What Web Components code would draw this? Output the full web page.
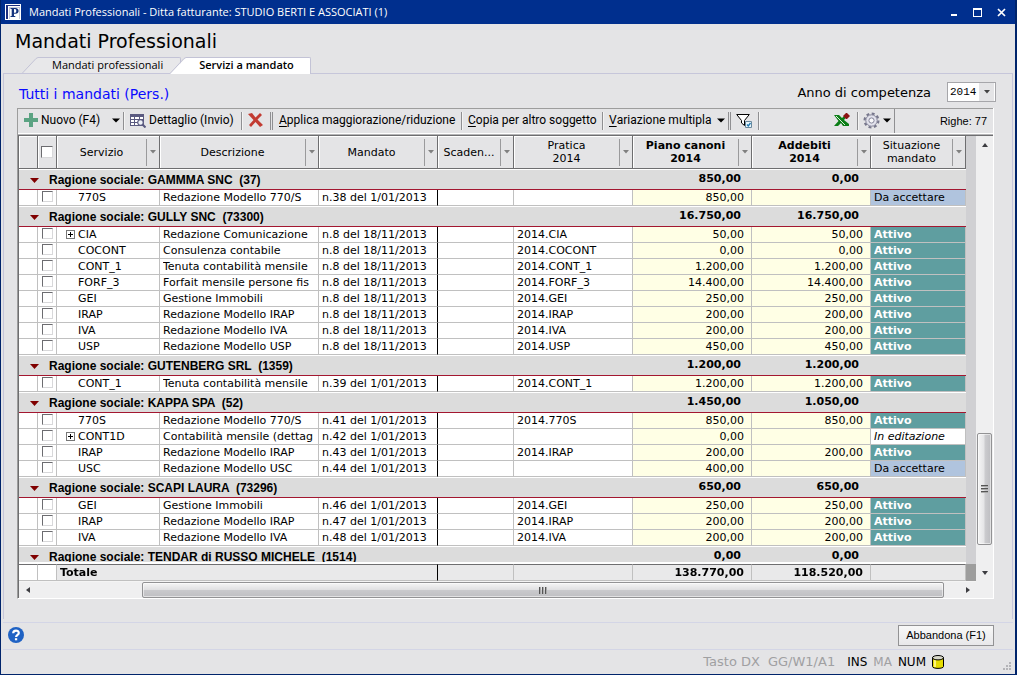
<!DOCTYPE html>
<html lang="it">
<head>
<meta charset="utf-8">
<title>Mandati Professionali</title>
<style>
html, body { height: 100%; margin: 0; }
body { background: #00246b; font: 11px/15px "DejaVu Sans", sans-serif; color: #000; }
</style>
</head>
<body>
<app-window></app-window>

<script>
const define = (name, html, setup) => {
  const tpl = document.createElement('template');
  tpl.innerHTML = html;
  customElements.define(name, class extends HTMLElement {
    connectedCallback() {
      if (this.shadowRoot) return;
      this.attachShadow({ mode: 'open' }).append(tpl.content.cloneNode(true));
      if (setup) setup(this, this.shadowRoot);
    }
  });
};

/* ---------- title bar ---------- */
define('title-bar', `
<style>
:host { display: flex; align-items: center; height: 24px; flex: none; background: #002f8e; color: #fff; font: 11px/16px "Open Sans", sans-serif; padding: 0 2px 0 4px; }
span { margin-left: 8px; flex: 1; white-space: nowrap; overflow: hidden; }
button { appearance: none; border: 0; padding: 0; background: none; width: 24px; height: 20px; color: #fff; display: grid; place-items: center; }
svg { display: block; }
</style>
<svg width="16" height="16" viewBox="0 0 16 16" aria-hidden="true" shape-rendering="crispEdges">
  <path fill="#fff" d="M0 0h16v16H0z"/><path fill="#1d2f80" d="M1 1h14v1H3v13H1z"/><path fill="#c6cad8" d="M4 3h11v12H4z"/><path fill="#fff" d="M5 4h9v11H5z"/>
  <path fill="#16357f" shape-rendering="auto" fill-rule="evenodd" d="M5.500 4h5c4.200 0 4.200 5.800 0 5.800H9V12h1.300v1H5.500v-1h1.200V5H5.500zM9 5v3.800h.8c2 0 2-3.800 0-3.800z"/>
</svg>
<span><slot></slot></span>
<button aria-label="Riduci"><svg width="11" height="9"><path fill="#fff" d="M3 6h6v2H3z"/></svg></button>
<button aria-label="Ingrandisci"><svg width="11" height="9" shape-rendering="crispEdges"><path fill="#fff" fill-rule="evenodd" d="M1 0h9v9H1zM2 2v6h7V2z"/></svg></button>
<button aria-label="Chiudi"><svg width="9" height="9" viewBox="0 0 9 9"><path stroke="#fff" stroke-width="1.700" d="M1 1l7 7M8 1L1 8"/></svg></button>
`);

/* ---------- tabs ---------- */
define('page-tab', `
<style>
:host { display: flex; height: 17px; --line: #c3c3d6; --fill: #e8e8ea; }
:host([selected]) { --fill: #fff; margin-left: -11px; position: relative; }
svg { display: block; flex: none; }
button { appearance: none; box-sizing: border-box; margin: 0; height: 17px; border: solid var(--line); border-width: 1px 1px 0 0; border-radius: 0 2px 0 0; background: var(--fill); color: #000; padding: 0 17px 3px 14px; font: 11px/13px "Open Sans", sans-serif; white-space: nowrap; }
:host([selected]) button { font-weight: 600; padding: 0 16px 3px 13px; }
</style>
<svg width="16" height="17" viewBox="0 0 16 17"><path style="fill:var(--fill)" d="M0 17L16 .5V17z"/><path style="stroke:var(--line)" fill="none" d="M0 16.500L14 1.500 16 .5"/></svg>
<button role="tab"><slot></slot></button>
`);

/* ---------- toolbar pieces ---------- */
define('tool-button', `
<style>
:host { display: block; flex: none; }
button { appearance: none; border: 0; margin: 0; padding: 0; background: none; color: #000; font: 12px/16px Roboto, sans-serif; display: flex; align-items: center; height: 22px; white-space: nowrap; }
::slotted(svg) { display: block; margin-right: 3px; }
.arrow { display: none; margin-left: 6px; }
:host([menu]) .arrow { display: block; }
:host([menu=icon]) .arrow { margin-left: 0; }
</style>
<button><slot name="icon"></slot><slot></slot><svg class="arrow" width="8" height="5" viewBox="0 0 8 5"><path d="M0 .5h8L4 4.500z"/></svg></button>
`);
define('tool-separator', `
<style>
:host { display: block; flex: none; width: 0; height: 18px; border-left: 1px solid #8f8f92; border-right: 1px solid #f4f4f4; }
:host([double]) { width: 1px; border-right-color: #8f8f92; }
</style>`);

define('grid-toolbar', `
<style>
:host { display: flex; align-items: center; height: 24px; flex: none; padding-left: 6px; border-top: 1px solid #9d9d9d; border-bottom: 1px solid #fff; }
tool-button { padding-bottom: 2px; }
tool-separator { margin: 0 4px; }
.space { flex: 1; }
.count { display: flex; align-items: center; justify-content: flex-end; box-sizing: border-box; width: 99px; height: 24px; border-left: 1px solid #8f8f92; padding-right: 6px; margin-left: 3px; font: 11px/16px "Liberation Sans", sans-serif; }
u { text-underline-offset: 2px; }
.wide { width: 95px; }
.detail { width: 107px; margin-left: 1px; }
.drop { margin-left: 1px; }
.apply { margin-left: 2px; width: 178px; }
.copy { margin-left: 1px; width: 130px; }
.vary { margin-left: 1px; width: 115px; }
.filter { width: 18px; margin-left: 1px; }
</style>
<tool-button class="wide" menu><svg slot="icon" width="14" height="14" viewBox="0 0 14 14" shape-rendering="crispEdges"><path fill="#5ba383" d="M5 0h4v5h5v4H9v5H5V9H0V5h5z"/></svg>Nuovo (F4)&nbsp;&nbsp;</tool-button>
<tool-separator></tool-separator>
<tool-button class="detail"><svg slot="icon" width="16" height="15" viewBox="0 0 16 15"><path fill="#5a5a80" d="M0 1h14v12H0z"/><path fill="#fff" d="M1 4h3v2H1zM5 4h4v2H5zM10 4h3v2h-3zM1 7h3v2H1zM5 7h4v2H5zM10 7h3v2h-3zM1 10h3v2H1zM5 10h4v2H5z"/><circle cx="10.500" cy="9.500" r="2.800" fill="#eef2f8" stroke="#5a5a80" stroke-width="1.200"/><path stroke="#5a5a80" stroke-width="2" d="M12.500 11.500L15.500 14.500"/></svg>Dettaglio (Invio)</tool-button>
<tool-separator></tool-separator>
<tool-button class="drop" aria-label="Elimina"><svg slot="icon" width="15" height="15" viewBox="0 0 15 15"><path fill="#c23b32" d="M0 1l4-1 3.500 4.500L12 0l2 2-4.500 4.500L15 12l-3 2-4.500-5L3 14l-2-2 4.500-5z"/></svg></tool-button>
<tool-separator double></tool-separator>
<tool-button class="apply"><u>A</u>pplica maggiorazione/riduzione</tool-button>
<tool-separator></tool-separator>
<tool-button class="copy"><u>C</u>opia per altro soggetto</tool-button>
<tool-separator></tool-separator>
<tool-button class="vary" menu><u>V</u>ariazione multipla</tool-button>
<tool-separator double></tool-separator>
<tool-button class="filter"><svg slot="icon" width="17" height="15" viewBox="0 0 17 15"><path fill="#fff" stroke="#000" d="M.7 1.500h12.600L8.500 7.500v5L5.500 10V7.500z"/><path fill="#e8f4fa" stroke="#68889c" d="M9.500 8.500h6v6h-6z"/><path fill="none" stroke="#1f78b0" stroke-width="1.300" d="M11 11.500l1.300 1.500L14.500 10"/></svg></tool-button>
<tool-separator></tool-separator>
<span class="space"></span>
<tool-button><svg slot="icon" width="16" height="14" viewBox="0 0 16 14"><path fill="#0a7d16" d="M0 2h5l3 3 3-3h3l-4 5 5 4v2H9L7 10l-3 3H0l4.500-5z"/><path stroke="#d8f0d8" d="M2 3l9 9"/><path fill="#8b1111" d="M12 0h1l3 3-3 3h-1L9 3z"/></svg></tool-button>
<tool-separator></tool-separator>
<tool-button menu="icon"><svg slot="icon" width="17" height="17" viewBox="0 0 17 17"><circle cx="8.500" cy="8.500" r="6.900" fill="none" stroke="#77778c" stroke-width="2.200" stroke-dasharray="2.900 2.520"/><circle cx="8.500" cy="8.500" r="5.700" fill="#e2e2ec" stroke="#85859a"/><circle cx="8.500" cy="8.500" r="2.600" fill="#f8f8fa" stroke="#85859a"/></svg></tool-button>
<div class="count">Righe: 77</div>
`);

/* ---------- scroll bars: --before / --thumb / --after share out the track ---------- */
define('scroll-bar', `
<style>
:host { display: flex; background: #efeff0; box-sizing: border-box; }
:host([vertical]) { flex-direction: column; }
i { flex: 0 0 17px; display: grid; place-items: center; }
.b { flex: var(--before) 0 0px; } .a { flex: var(--after) 0 0px; }
.t { flex: var(--thumb) 0 0px; box-sizing: border-box; border: 1px solid #929294; border-radius: 2px; display: flex; align-items: center; justify-content: center; background: linear-gradient(#f5f5f5, #e0e0e2 48%, #c9c9cc 52%, #bfbfc3); box-shadow: inset 0 0 0 1px #ffffff88; }
:host([vertical]) .t { background: linear-gradient(90deg, #f5f5f5, #e4e4e6 48%, #cccccf 52%, #bdbdc1); margin: 0 1px; }
svg { display: block; }
.arrow { transform: rotate(-90deg); }
:host([vertical]) .arrow { transform: none; }
.a + i .arrow { transform: rotate(90deg); }
:host([vertical]) .a + i .arrow { transform: rotate(180deg); }
.grip { width: 8px; height: 7px; background: repeating-linear-gradient(90deg, #555 0 1px, #aaa 1px 2px, transparent 2px 3px); }
:host([vertical]) .grip { width: 7px; height: 8px; background: repeating-linear-gradient(#555 0 1px, #aaa 1px 2px, transparent 2px 3px); }
</style>
<i><svg class="arrow" width="8" height="8" viewBox="0 0 8 8"><path fill="#3c3c40" d="M1 6l3-4 3 4z"/></svg></i>
<div class="b"></div><div class="t"><div class="grip"></div></div><div class="a"></div>
<i><svg class="arrow" width="8" height="8" viewBox="0 0 8 8"><path fill="#3c3c40" d="M1 6l3-4 3 4z"/></svg></i>
`);

/* ---------- data grid ---------- */
const groups = [
  ['GAMMMA SNC', '37', '850,00', '0,00', [
    ['770S', 'Redazione Modello 770/S', 'n.38 del 1/01/2013', '', '850,00', '', 'wait']]],
  ['GULLY SNC', '73300', '16.750,00', '16.750,00', [
    ['+CIA', 'Redazione Comunicazione', 'n.8 del 18/11/2013', '2014.CIA', '50,00', '50,00', 'on'],
    ['COCONT', 'Consulenza contabile', 'n.8 del 18/11/2013', '2014.COCONT', '0,00', '0,00', 'on'],
    ['CONT_1', 'Tenuta contabilità mensile', 'n.8 del 18/11/2013', '2014.CONT_1', '1.200,00', '1.200,00', 'on'],
    ['FORF_3', 'Forfait mensile persone fis', 'n.8 del 18/11/2013', '2014.FORF_3', '14.400,00', '14.400,00', 'on'],
    ['GEI', 'Gestione Immobili', 'n.8 del 18/11/2013', '2014.GEI', '250,00', '250,00', 'on'],
    ['IRAP', 'Redazione Modello IRAP', 'n.8 del 18/11/2013', '2014.IRAP', '200,00', '200,00', 'on'],
    ['IVA', 'Redazione Modello IVA', 'n.8 del 18/11/2013', '2014.IVA', '200,00', '200,00', 'on'],
    ['USP', 'Redazione Modello USP', 'n.8 del 18/11/2013', '2014.USP', '450,00', '450,00', 'on']]],
  ['GUTENBERG SRL', '1359', '1.200,00', '1.200,00', [
    ['CONT_1', 'Tenuta contabilità mensile', 'n.39 del 1/01/2013', '2014.CONT_1', '1.200,00', '1.200,00', 'on']]],
  ['KAPPA SPA', '52', '1.450,00', '1.050,00', [
    ['770S', 'Redazione Modello 770/S', 'n.41 del 1/01/2013', '2014.770S', '850,00', '850,00', 'on'],
    ['+CONT1D', 'Contabilità mensile (dettag', 'n.42 del 1/01/2013', '', '0,00', '', 'edit'],
    ['IRAP', 'Redazione Modello IRAP', 'n.43 del 1/01/2013', '2014.IRAP', '200,00', '200,00', 'on'],
    ['USC', 'Redazione Modello USC', 'n.44 del 1/01/2013', '', '400,00', '', 'wait']]],
  ['SCAPI LAURA', '73296', '650,00', '650,00', [
    ['GEI', 'Gestione Immobili', 'n.46 del 1/01/2013', '2014.GEI', '250,00', '250,00', 'on'],
    ['IRAP', 'Redazione Modello IRAP', 'n.47 del 1/01/2013', '2014.IRAP', '200,00', '200,00', 'on'],
    ['IVA', 'Redazione Modello IVA', 'n.48 del 1/01/2013', '2014.IVA', '200,00', '200,00', 'on']]],
  ['TENDAR di RUSSO MICHELE', '1514', '0,00', '0,00', []]
];
const states = { on: 'Attivo', wait: 'Da accettare', edit: 'In editazione' };

define('mandate-grid', `
<style>
:host { display: block; overflow: hidden; background: #d0d0d3; }
table { width: 100%; table-layout: fixed; border-collapse: separate; border-spacing: 0; }
th, td { padding: 0; box-sizing: border-box; white-space: nowrap; overflow: hidden; font-weight: 400; }
thead { position: sticky; top: 0; z-index: 1; }
th { height: 33px; line-height: 13px; background: #e4e4e6; border: solid #6e6e70; border-width: 0 1px 1px 0; box-shadow: inset 1px 1px #fff; }
th.fill, td.fill { border: 0; box-shadow: none; background: #d0d0d3; }
th.b { font-weight: 700; }
.h { display: flex; align-items: center; height: 32px; }
.h span { flex: 1; text-align: center; }
.h button { appearance: none; background: none; border: 0; border-left: 1px solid #9a9a9c; padding: 0; width: 13px; height: 27px; display: grid; place-items: center; }
td { height: 16px; line-height: 15px; background: #fff; border: solid #c0c0c0; border-width: 0 1px 1px 0; }
td div { overflow: hidden; margin: 0 3px; height: 15px; }
td.n { text-align: right; background: #ffffe5; } td.n div { margin-right: 7px; }
td.m { border-right-color: #000; }
td.s div { margin: 0 0 0 9px; display: flex; align-items: center; gap: 3px; }
.s svg, .s i { width: 9px; height: 9px; flex: none; }
td.on { background: #5f9ea0; color: #fff; font-weight: 700; }
td.wait { background: #b0c4de; }
td.edit { font-style: italic; }
input { appearance: none; display: block; box-sizing: border-box; width: 11px; height: 11px; margin: 0 0 2px 4px; background: #fff; border: 1px solid; border-color: #6c6c70 #d8d8da #d8d8da #6c6c70; }
input.big { width: 12px; height: 12px; margin: 0 auto; }
.g td { height: 21px; background: #dcdcdc; border: solid; border-width: 1px 0; border-color: #fff #dcdcdc #a31730; font-weight: 700; }
.g td.n div { margin-right: 11px; height: 18px; line-height: 16px; }
.g td.n + td.n div { margin-right: 12px; }
.g .l div { display: flex; align-items: center; gap: 10px; margin: 0 0 0 11px; height: 19px; padding-top: 1px; box-sizing: border-box; font: bold 12px/16px "Liberation Sans", sans-serif; white-space: pre; }
.g td.fill { border: 0; background: #d0d0d3; }
tfoot { position: sticky; bottom: 0; z-index: 1; }
tfoot td { height: 17px; border-top: 1px solid #6e6e70; background: #e9e9ea; font-weight: 700; box-shadow: 0 -2px #fff; }
tfoot td.w { background: #fff; } tfoot td.n { background: #e9e9ea; }
tfoot td.fill { background: #9d9d9d; box-shadow: none; }
</style>
<table>
<colgroup><col style="width:19px"><col style="width:19px"><col style="width:103px"><col style="width:159px"><col style="width:119px"><col style="width:76px"><col style="width:119px"><col style="width:119px"><col style="width:119px"><col style="width:95px"><col></colgroup>
<thead><tr></tr></thead>
<tbody></tbody>
<tfoot><tr><td class="w"></td><td class="w"></td><td class="m" colspan="3"><div>Totale</div></td><td></td><td></td><td class="n"><div>138.770,00</div></td><td class="n"><div>118.520,00</div></td><td></td><td class="fill"></td></tr></tfoot>
</table>
`, (host, root) => {
  const head = ['Servizio', 'Descrizione', 'Mandato', 'Scaden...', 'Pratica<br>2014', '*Piano canoni<br>2014', '*Addebiti<br>2014', 'Situazione<br>mandato'];
  root.querySelector('thead tr').innerHTML =
    '<th></th><th><div class="h"><input class="big" type="checkbox" aria-label="Seleziona tutto"></div></th>' +
    head.map(t => `<th scope="col"${t[0] === '*' ? ' class="b"' : ''}><div class="h"><span>${t.replace('*', '')}</span><button aria-label="Filtra"><svg width="6" height="4"><path fill="#808080" d="M0 0h6L3 3.500z"/></svg></button></div></th>`).join('') +
    '<th class="fill"></th>';
  const cell = (c, t) => `<td class="${c}"><div>${t}</div></td>`;
  const plus = '<svg viewBox="0 0 9 9" shape-rendering="crispEdges"><path fill="#fff" stroke="#777" d="M.5.5h8v8h-8z"/><path fill="#000" d="M2 4h5v1H2zM4 2h1v5H4z"/></svg>';
  root.querySelector('tbody').innerHTML = groups.map(([name, id, a, b, rows]) =>
    `<tr class="g"><td class="l" colspan="7"><div><svg width="9" height="5"><path fill="#800000" d="M0 0h9L4.500 5z"/></svg><span>Ragione sociale: ${name}  (${id})</span></div></td>` +
    cell('n', a) + cell('n', b) + '<td></td><td class="fill"></td></tr>' +
    rows.map(([s, d, m, p, x, y, st]) => {
      const open = s[0] === '+';
      const code = s.replace('+', '');
      return `<tr><td></td><td><input type="checkbox" aria-label="${code}"></td>` +
        cell('s', (open ? plus : '<i></i>') + code) + cell('', d) + cell('m', m) + '<td></td>' +
        cell('', p) + cell('n', x) + cell('n', y) + cell(st, states[st]) + '<td class="fill"></td></tr>';
    }).join('')).join('');
});

/* ---------- status bar ---------- */
define('status-bar', `
<style>
:host { display: flex; align-items: center; justify-content: flex-end; gap: 6px; height: 24px; flex: none; border-top: 1px solid #d3d5e6; margin: 0 2px; font: 12px/16px "DejaVu Sans", sans-serif; color: #000; white-space: nowrap; }
.off { color: #a0a0a2; }
.key { font-size: 13px; margin-right: 2px; }
.group { display: flex; align-items: center; gap: 6px; margin-left: 4px; }
svg { display: block; }
.grip { align-self: flex-end; margin: 0 2px 4px 53px; }
</style>
<span class="off key">Tasto DX</span><span class="off key">GG/W1/A1</span>
<div class="group"><span>INS</span><span class="off">MA</span><span>NUM</span>
<svg width="12" height="14" viewBox="0 0 12 14"><path fill="#e6dc00" stroke="#000" d="M.5 2.500v9c0 2.500 11 2.500 11 0v-9z"/><path fill="#fff67a" d="M2 5h2v7H2z"/><ellipse cx="6" cy="2.700" rx="5.500" ry="2.200" fill="#d8d8c8" stroke="#000"/></svg></div>
<svg class="grip" width="8" height="8"><path fill="#b4b4b8" d="M6 0h2v2H6zM3 3h2v2H3zM6 3h2v2H6zM0 6h2v2H0zM3 6h2v2H3zM6 6h2v2H6z"/></svg>
`);

/* ---------- window ---------- */
define('app-window', `
<style>
:host { display: flex; flex-direction: column; box-sizing: border-box; height: 100vh; min-height: 400px; background: #e4e4e6; border: solid #00246b; border-width: 0 2px 1px 1px; }
h1 { flex: none; margin: 0; padding-left: 14px; height: 33px; font: 400 19px/34px "DejaVu Sans", sans-serif; }
nav { display: flex; flex: none; height: 16px; padding-left: 21px; }
main { flex: 1; min-height: 0; display: flex; flex-direction: column; margin: 0 2px 3px; border: 1px solid #c6c6da; border-bottom: 0; padding: 0 18px 20px 13px; }
.head { display: flex; align-items: center; justify-content: space-between; height: 34px; flex: none; margin-right: -2px; padding: 2px 0 0 2px; box-sizing: border-box; }
h2 { margin: 0; padding-top: 4px; font: 400 14px/18px "DejaVu Sans", sans-serif; color: #0a0aff; }
.year { display: flex; align-items: center; gap: 16px; font-size: 13px; line-height: 18px; }
.year label { padding-top: 2px; }
.box { position: relative; }
.box select { appearance: none; display: block; box-sizing: border-box; width: 49px; height: 20px; margin: 0; padding: 0 0 0 2px; border: 1px solid #a6a6aa; border-radius: 0; color: #000; background: linear-gradient(90deg, #fff 31px, #e4e4e6 31px 46px, #fff 46px); font: 11px/18px "Liberation Mono", monospace; }
.box svg { position: absolute; right: 6px; top: 8px; pointer-events: none; }
.frame { flex: 1; min-height: 0; display: flex; flex-direction: column; border: solid; border-width: 0 1px 1px; border-color: #fff #fff #fff #9d9d9d; }
.grid { flex: 1; min-height: 0; display: grid; grid-template: minmax(0, 1fr) 17px / minmax(0, 1fr) 17px; border: solid #6e6e70; border-width: 1px 0 0 1px; box-shadow: 0 -1px #b4b4b6; margin-top: 1px; background: #efeff0; }
mandate-grid { min-width: 0; }
.v { --before: 281; --thumb: 110; --after: 19; }
.x { --before: 106; --thumb: 802; --after: 15; border-top: 1px solid #f4f4f4; }
footer { display: flex; flex: none; align-items: center; justify-content: space-between; box-sizing: border-box; height: 27px; margin: 0 2px; padding: 0 19px 2px 5px; border-top: 1px solid #d3d5e6; }
footer button { appearance: none; margin: 0; }
.help { border: 0; padding: 0; background: none; } .help svg { display: block; }
.quit { box-sizing: border-box; width: 96px; height: 21px; padding: 0; border: 1px solid #929294; border-radius: 0; color: #000; background: linear-gradient(#f8f8f8, #e8e8ea); font: 11px/18px "Liberation Sans", sans-serif; }
</style>
<title-bar>Mandati Professionali - Ditta fatturante: STUDIO BERTI E ASSOCIATI (1)</title-bar>
<h1>Mandati Professionali</h1>
<nav role="tablist"><page-tab>Mandati professionali</page-tab><page-tab selected>Servizi a mandato</page-tab></nav>
<main>
  <div class="head">
    <h2>Tutti i mandati (Pers.)</h2>
    <div class="year"><label for="year">Anno di competenza</label>
      <div class="box"><select id="year"><option>2014</option><option>2013</option></select><svg width="6" height="4"><path fill="#444" d="M0 0h6L3 3.500z"/></svg></div></div>
  </div>
  <div class="frame">
    <grid-toolbar></grid-toolbar>
    <div class="grid">
      <mandate-grid></mandate-grid>
      <scroll-bar class="v" vertical></scroll-bar>
      <scroll-bar class="x"></scroll-bar>
    </div>
  </div>
</main>
<footer>
  <button class="help" aria-label="Aiuto"><svg width="16" height="16" viewBox="0 0 16 16"><circle cx="8" cy="8" r="8" fill="#1f62c4"/><path fill="none" stroke="#fff" stroke-width="2.200" d="M5.200 6.300c0-3.600 5.600-3.400 5.600-.3 0 1.900-2.700 1.900-2.700 4"/><path fill="#fff" d="M6.900 11.200h2.300v2.100H6.900z"/></svg></button>
  <button class="quit">Abbandona (F1)</button>
</footer>
<status-bar></status-bar>
`);
</script>
</body>
</html>
